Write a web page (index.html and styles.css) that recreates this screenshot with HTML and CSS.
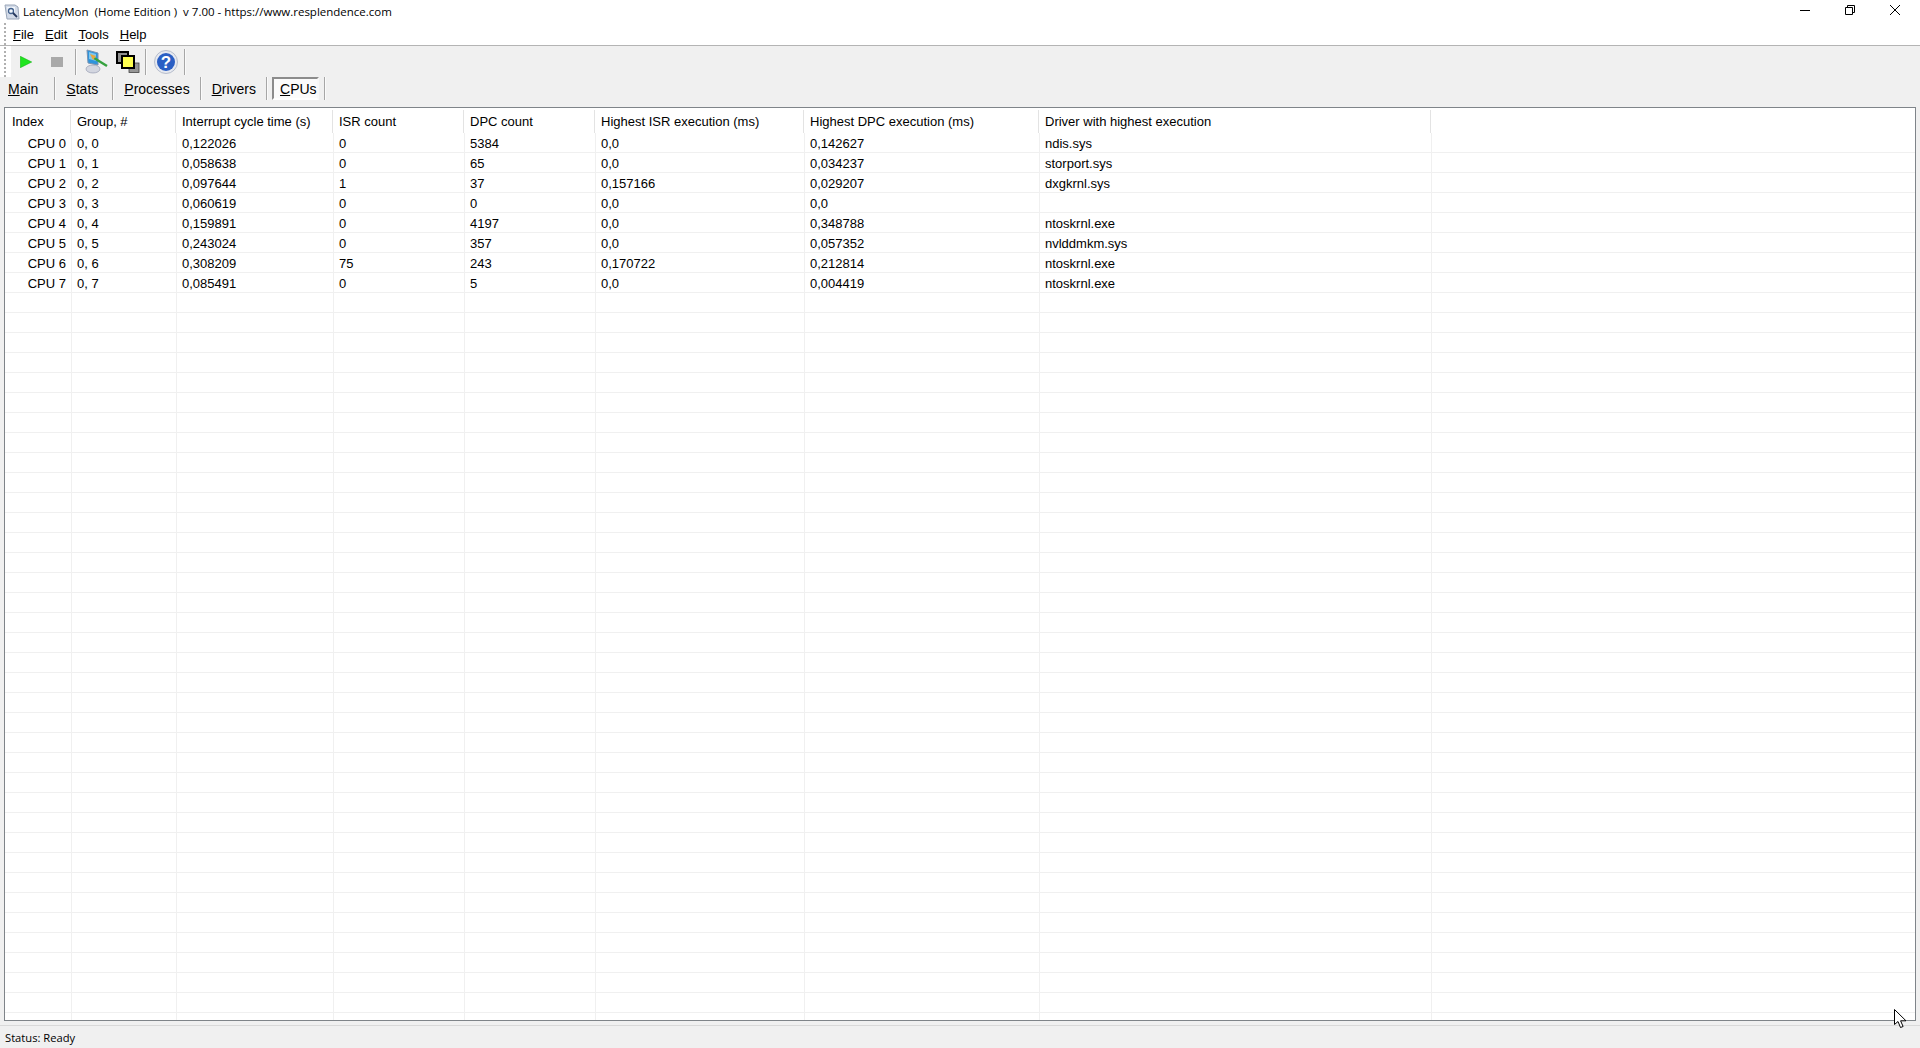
FILE: index.html
```html
<!DOCTYPE html>
<html lang="en">
<head>
<meta charset="utf-8">
<title>LatencyMon</title>
<link rel="stylesheet" href="styles.css">
</head>
<body>
<div class="window">
  <header class="titlebar">
    <svg class="appicon" width="16" height="16" viewBox="0 0 16 16"><path d="M1 1h10l3 2 1 12H3z" fill="#d3dbe8" stroke="#9aa6b8"/><path d="M3 3h8v5H4z" fill="#f2f6fb"/><circle cx="7" cy="7" r="2.500" fill="#f4f8fc" stroke="#41608c" stroke-width="1.300"/><path d="M9 9l4 4" stroke="#26385c" stroke-width="1.800"/></svg>
    <span class="title">LatencyMon&nbsp; (Home Edition )&nbsp; v 7.00 - https://www.resplendence.com</span>
    <div class="winbtns">
      <svg width="10" height="10" viewBox="0 0 10 10"><path d="M0 5.500h10" stroke="#000" fill="none"/></svg>
      <svg width="10" height="10" viewBox="0 0 10 10"><path d="M.5 2.500h7v7h-7zM2.500 2.500v-2h7v7h-2" stroke="#000" fill="none"/></svg>
      <svg width="10" height="10" viewBox="0 0 10 10"><path d="M0 0l10 10M10 0L0 10" stroke="#000" fill="none"/></svg>
    </div>
  </header>
  <nav class="menubar">
    <span class="grip"></span>
    <span class="menu"><u>F</u>ile</span>
    <span class="menu"><u>E</u>dit</span>
    <span class="menu"><u>T</u>ools</span>
    <span class="menu"><u>H</u>elp</span>
  </nav>
  <div class="toolbar">
    <span class="grip"></span>
    <span class="tool play"><svg width="12" height="12" viewBox="0 0 12 12"><path d="M.3.300L11.700 6 .3 11.700z" fill="#1fe51f" stroke="#14b514" stroke-width=".6"/></svg></span>
    <span class="tool stop"><svg width="12" height="10" viewBox="0 0 12 10"><rect width="12" height="10" fill="#a9a9a9"/></svg></span>
    <span class="tsep"></span>
    <span class="tool icon mon"><svg width="24" height="25" viewBox="0 0 24 25"><path d="M3 1l11 3v12L4 14z" fill="#2e94dc" stroke="#7a93b2"/><path d="M5 3l7 2v7L5 10z" fill="#7fc6ee"/><ellipse cx="9" cy="20" rx="7" ry="4" fill="#d3d6e0" stroke="#8a90a8" stroke-width=".6"/><path d="M10 9l13 8" stroke="#36a23f" stroke-width="2.400"/><path d="M6 5l6 2-3 4z" fill="#e9a83c"/></svg></span>
    <span class="tool icon chain"><svg width="24" height="22" viewBox="0 0 24 22"><rect x="1" y="1" width="11" height="11" fill="#8f8f8f" stroke="#000" stroke-width="2"/><rect x="13" y="12" width="10" height="9.500" fill="#969696" stroke="#444" stroke-width=".8"/><rect x="6" y="5" width="12" height="12" fill="#ffff50" stroke="#000" stroke-width="2"/></svg></span>
    <span class="tsep"></span>
    <span class="tool icon help"><svg width="24" height="24" viewBox="0 0 24 24"><circle cx="12" cy="12" r="11.500" fill="#e6e9f0" stroke="#a9b1c2" stroke-width=".8"/><circle cx="12" cy="12" r="9" fill="#2a5fc4"/><text x="12" y="17.500" class="q">?</text></svg></span>
    <span class="tsep"></span>
  </div>
  <div class="tabs">
    <span class="tab t-main"><u>M</u>ain</span><span class="tsep"></span>
    <span class="tab t-stats"><u>S</u>tats</span><span class="tsep"></span>
    <span class="tab"><u>P</u>rocesses</span><span class="tsep"></span>
    <span class="tab"><u>D</u>rivers</span><span class="tsep"></span>
    <span class="tab active"><u>C</u>PUs</span><span class="tsep"></span>
  </div>
  <main class="list">
    <div class="row head"><span>Index</span><span>Group, #</span><span>Interrupt cycle time (s)</span><span>ISR count</span><span>DPC count</span><span>Highest ISR execution (ms)</span><span>Highest DPC execution (ms)</span><span>Driver with highest execution</span></div>
    <div class="body">
      <div class="row"><span class="idx">CPU 0</span><span>0, 0</span><span>0,122026</span><span>0</span><span>5384</span><span>0,0</span><span>0,142627</span><span>ndis.sys</span></div>
      <div class="row"><span class="idx">CPU 1</span><span>0, 1</span><span>0,058638</span><span>0</span><span>65</span><span>0,0</span><span>0,034237</span><span>storport.sys</span></div>
      <div class="row"><span class="idx">CPU 2</span><span>0, 2</span><span>0,097644</span><span>1</span><span>37</span><span>0,157166</span><span>0,029207</span><span>dxgkrnl.sys</span></div>
      <div class="row"><span class="idx">CPU 3</span><span>0, 3</span><span>0,060619</span><span>0</span><span>0</span><span>0,0</span><span>0,0</span><span></span></div>
      <div class="row"><span class="idx">CPU 4</span><span>0, 4</span><span>0,159891</span><span>0</span><span>4197</span><span>0,0</span><span>0,348788</span><span>ntoskrnl.exe</span></div>
      <div class="row"><span class="idx">CPU 5</span><span>0, 5</span><span>0,243024</span><span>0</span><span>357</span><span>0,0</span><span>0,057352</span><span>nvlddmkm.sys</span></div>
      <div class="row"><span class="idx">CPU 6</span><span>0, 6</span><span>0,308209</span><span>75</span><span>243</span><span>0,170722</span><span>0,212814</span><span>ntoskrnl.exe</span></div>
      <div class="row"><span class="idx">CPU 7</span><span>0, 7</span><span>0,085491</span><span>0</span><span>5</span><span>0,0</span><span>0,004419</span><span>ntoskrnl.exe</span></div>
    </div>
  </main>
  <footer class="status">Status: Ready</footer>
  <svg class="cursor" width="13" height="20" viewBox="0 0 13 20"><path d="M.5.500v15l3.500-3 2.500 6 2.600-1-2.500-5.700H12z" fill="#fff" stroke="#000"/></svg>
</div>
</body>
</html>
```

FILE: styles.css
```css
* { box-sizing: border-box; }
html, body { margin: 0; height: 100%; }
body { font-family: "Liberation Sans", Arial, sans-serif; color: #000; background: #f0f0f0; overflow: hidden; }
.window { position: relative; display: flex; flex-direction: column; height: 1048px; }

.titlebar { display: flex; align-items: center; height: 22px; background: #fff; padding-left: 4px; flex: none; }
.appicon { flex: none; margin-top: 1px; }
.title { margin-left: 3px; font: 11.5px "Open Sans", sans-serif; color: #000; white-space: nowrap; }
.winbtns { margin-left: auto; align-self: flex-start; display: flex; gap: 35px; padding: 5px 20px 0 0; }

.menubar { display: flex; align-items: center; height: 24px; background: #fff; border-bottom: 1px solid #b4b4b4; flex: none; font-size: 13px; gap: 11px; }
.grip { width: 11px; align-self: stretch; flex: none; background: #fff linear-gradient(to bottom, #b0b0b0 2px, transparent 2px) 4px 1px / 2px 4px repeat-y; }
.menubar .grip { margin-right: -9px; }
.menu { padding-top: 1px; }

.toolbar { display: flex; align-items: center; height: 31px; flex: none; background: #f0f0f0; }
.tool { display: flex; align-items: center; justify-content: center; flex: none; }
.play { width: 30px; }
.stop { width: 34px; padding-right: 2px; }
.icon { width: 24px; }
.mon { margin: 0 8px; }
.chain { margin-right: 5px; }
.help { margin: 0 6px 0 8px; }
.tsep { width: 1px; background: #a6a6a6; box-shadow: 1px 0 #fafafa; align-self: stretch; margin: 3px 0 2px; flex: none; }

.tabs { display: flex; align-items: stretch; height: 23px; flex: none; font-size: 14px; }
.tabs .tsep { margin: 0; }
.tab { display: flex; align-items: center; padding: 0 10px 0 11px; }
.t-main { padding: 0 16px 0 8px; }
.t-stats { padding-right: 14px; }
.tab.active { margin: 0 5px; width: 47px; padding: 0 0 0 6px; background: #fbfbfb; border: 2px solid; border-color: #8c8c8c #f8f8f8 #fff #8c8c8c; }

.list { flex: 1; display: flex; flex-direction: column; margin: 7px 4px 4px; background: #fff; border: 1px solid #7f8489; min-height: 0; }
.row { display: grid; grid-template-columns: 66px 105px 157px 131px 131px 209px 235px 392px; height: 20px; font-size: 13px; white-space: nowrap; align-items: center; }
.row span { padding-left: 6px; }
.head { height: 25px; flex: none; padding: 1px 0 0; }
.head span { height: 23px; line-height: 23px; border-right: 1px solid #e3e3e3; }
.head span:first-child { padding-left: 7px; }
.body {
  flex: 1; overflow: hidden;
  background-image:
    linear-gradient(#f0f0f0, #f0f0f0), linear-gradient(#f0f0f0, #f0f0f0), linear-gradient(#f0f0f0, #f0f0f0), linear-gradient(#f0f0f0, #f0f0f0),
    linear-gradient(#f0f0f0, #f0f0f0), linear-gradient(#f0f0f0, #f0f0f0), linear-gradient(#f0f0f0, #f0f0f0), linear-gradient(#f0f0f0, #f0f0f0),
    repeating-linear-gradient(to bottom, #fff 0 19px, #f0f0f0 19px 20px);
  background-size: 1px 100%, 1px 100%, 1px 100%, 1px 100%, 1px 100%, 1px 100%, 1px 100%, 1px 100%, auto;
  background-position: 66px 0, 171px 0, 328px 0, 459px 0, 590px 0, 799px 0, 1034px 0, 1426px 0, 0 0;
  background-repeat: no-repeat;
}
.row .idx { text-align: right; padding: 0 5px 0 0; }

.status { height: 23px; flex: none; display: flex; align-items: center; padding: 1px 0 0 5px; border-top: 1px solid #d9d9d9; font: 11.2px "Open Sans", sans-serif; }
.q { font: bold 17px "Liberation Sans", sans-serif; fill: #fff; text-anchor: middle; }
.cursor { position: absolute; left: 1894px; top: 1009px; }
```
